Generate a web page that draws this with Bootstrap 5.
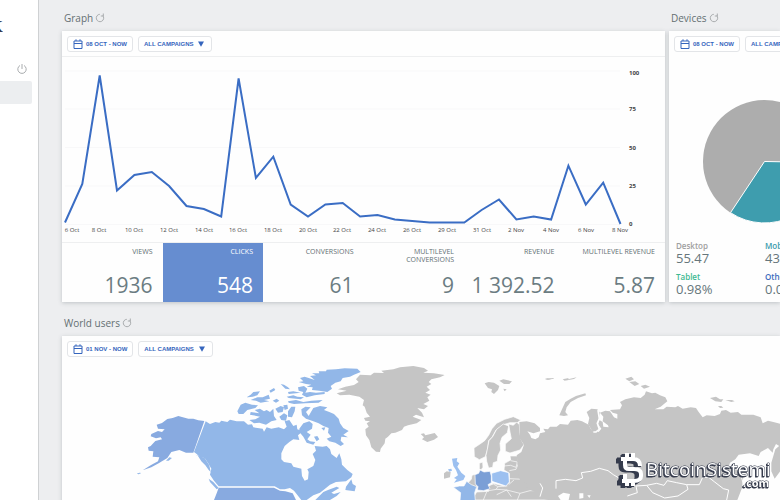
<!DOCTYPE html>
<html lang="en">
<head>
<meta charset="utf-8">
<meta name="viewport" content="width=device-width, initial-scale=1">
<title>Campaign statistics</title>
<link href="https://cdn.jsdelivr.net/npm/bootstrap@5.3.0/dist/css/bootstrap.min.css" rel="stylesheet">
<style>
body { background: #edeef0; font-family: "Open Sans", sans-serif; color: #5f6e73; }
svg { display: block; }
.side { flex: 0 0 39px; background: #fff; border-right: 1px solid #cfd1d3; padding-top: 15px; }
.brand-end { width: 3px; font: 700 17px/24px "Liberation Serif", serif; color: #333a4d; }
.side-item { display: block; height: 23px; margin: 7px 6px 0 0; background: #eceef0; border-radius: 0 2px 2px 0; }
.icon-btn { background: none; border: 0; padding: 0; line-height: 0; color: #a9acae; }
.power { margin: 25px 11px 0 0; }
.workspace { min-width: 0; padding: 9px 0 0 23px; }
.head-row { height: 22px; padding: 0 0 4px 2px; gap: 2px; }
.panel-title { font-size: 10px; line-height: 18px; margin: 0; font-weight: 400; color: #646e72; }
.panel-box { background: #fefefe; box-shadow: 0 1px 4px rgba(60, 70, 80, .25); }
.tools { padding: 5px 5px 4px; gap: 5px; height: 25px; }
.pill { flex: none; display: flex; align-items: center; gap: 3px; height: 16px; padding: 0 5px; background: #fff; border: 1px solid #e3e5e8; border-radius: 3px; color: #3565bd; font: 700 6px/14px "Liberation Sans", sans-serif; white-space: nowrap; }
.pill-drop { gap: 5px; padding: 0 7px 0 5px; }
.graph-col { min-width: 0; }
.device-col { flex: 0 0 111px; min-width: 0; }
.plot { border-top: 1px solid #eeeff0; border-bottom: 1px solid #eeeff0; }
.stat { flex: 1 1 0; min-width: 0; height: 59px; padding: 5px 10px 4px 0; text-align: right; }
.stat-name { font-size: 7px; line-height: 8px; }
.stat-num { font-size: 21px; line-height: 26px; color: #6b7c82; white-space: nowrap; }
.stat-on { background: #668dd0; color: #fff; }
.stat-on .stat-num { color: #fff; }
.legend-grid { display: grid; grid-template-columns: 89px 89px; row-gap: 7px; margin: 0; padding: 0 0 6px 7px; }
.legend-grid dt { font-size: 8px; line-height: 10px; font-weight: 600; }
.legend-grid dd { font-size: 13px; line-height: 14px; margin: 0; color: #66767b; }
.c-desktop { color: #a0a0a0; }
.c-mobile { color: #3b9bad; }
.c-tablet { color: #3db992; }
.c-other { color: #3a6bbd; }
.world { margin-top: 12px; }
.axis-x { font: 6px "Open Sans", sans-serif; fill: #444; text-anchor: middle; }
.axis-y { font: 700 6px "Open Sans", sans-serif; fill: #444; }
.watermark { fill: #fff; filter: drop-shadow(-1px 1px 0 #353b4c); }
.watermark text { stroke: #353b4c; stroke-width: 1px; paint-order: stroke; }
.wm { font: 19px "Open Sans", sans-serif; }
.wm-end { font: 700 11px "Open Sans", sans-serif; }
</style>
<script src="https://cdn.jsdelivr.net/npm/bootstrap@5.3.0/dist/js/bootstrap.bundle.min.js"></script>
</head>
<body class="overflow-hidden">
<svg width="0" height="0" class="position-absolute" aria-hidden="true">
  <symbol id="reload" viewBox="0 0 10 10"><path d="M7.800 2.600A3.700 3.700 0 1 1 4.800 1.300M8.300 .5V3H5.800" fill="none" stroke="currentColor"/></symbol>
  <symbol id="cal" viewBox="0 0 10 10"><path d="M1 2h8v7.5H1zM1 4.5h8M3 .3V2M7 .3V2" fill="none" stroke="currentColor"/></symbol>
  <symbol id="down" viewBox="0 0 6 6"><path d="M0 .5h6L3 5.8z" fill="currentColor"/></symbol>
</svg>
<div class="d-flex vh-100">
  <aside class="side">
    <div class="brand-end d-flex justify-content-end overflow-hidden">K</div>
    <button class="icon-btn power d-block ms-auto" aria-label="Log out"><svg width="10" height="10" viewBox="0 0 10 10"><path d="M3 1.5A4.2 4.2 0 1 0 7 1.5M5 0V5" fill="none" stroke="currentColor"/></svg></button>
    <a class="side-item" href="#" aria-label="Statistics"></a>
  </aside>
  <main class="workspace flex-grow-1 overflow-hidden">
    <div class="d-flex gap-1">
      <section class="graph-col flex-fill">
        <div class="head-row d-flex align-items-center"><h2 class="panel-title">Graph</h2><button class="icon-btn" aria-label="Reload graph"><svg width="10" height="10"><use href="#reload"/></svg></button></div>
        <div class="panel-box">
          <div class="tools d-flex">
            <button class="pill"><svg width="10" height="10"><use href="#cal"/></svg>08 OCT - NOW</button>
            <button class="pill pill-drop">ALL CAMPAIGNS<svg width="6" height="6"><use href="#down"/></svg></button>
          </div>
          <div class="plot">
            <svg class="w-100" viewBox="62 57 603 185" role="img" aria-label="Clicks by day">
              <path d="M65 71H620M65 109H620M65 147.500H620M65 186H620M65 224.500H620" stroke="#f8f8f9"/>
              <polyline fill="none" stroke="#3a6dc4" stroke-width="2" points="65,222.500 82.300,184 99.700,75.500 117,190.500 134.400,175 151.800,172 169.100,186 186.500,206 203.900,209 221.200,216.500 238.600,78.500 255.900,178 273.300,156.700 290.700,204.500 308,216.500 325.400,204.500 342.700,203 360.100,216.500 377.500,215 394.800,219.500 412.200,221 429.600,222.500 446.900,222.500 464.300,222.500 481.600,210 499,199.500 516.400,219.500 533.700,216.500 551.100,219.500 568.400,165.700 585.800,204.500 603.200,182.700 620.500,224"/>
              <g class="axis-x">
                <text x="72" y="232">6 Oct</text><text x="99" y="232">8 Oct</text><text x="134" y="232">10 Oct</text><text x="169" y="232">12 Oct</text><text x="204" y="232">14 Oct</text><text x="238" y="232">16 Oct</text><text x="273" y="232">18 Oct</text><text x="308" y="232">20 Oct</text><text x="342" y="232">22 Oct</text><text x="377" y="232">24 Oct</text><text x="412" y="232">26 Oct</text><text x="447" y="232">29 Oct</text><text x="482" y="232">31 Oct</text><text x="516" y="232">2 Nov</text><text x="551" y="232">4 Nov</text><text x="586" y="232">6 Nov</text><text x="620" y="232">8 Nov</text>
              </g>
              <g class="axis-y"><text x="629" y="75">100</text><text x="629" y="111">75</text><text x="629" y="150">50</text><text x="629" y="188">25</text><text x="629" y="226">0</text></g>
            </svg>
          </div>
          <div class="d-flex">
            <div class="stat d-flex flex-column justify-content-between"><div class="stat-name">VIEWS</div><div class="stat-num">1936</div></div>
            <div class="stat stat-on d-flex flex-column justify-content-between"><div class="stat-name">CLICKS</div><div class="stat-num">548</div></div>
            <div class="stat d-flex flex-column justify-content-between"><div class="stat-name">CONVERSIONS</div><div class="stat-num">61</div></div>
            <div class="stat d-flex flex-column justify-content-between"><div class="stat-name">MULTILEVEL<br>CONVERSIONS</div><div class="stat-num">9</div></div>
            <div class="stat d-flex flex-column justify-content-between"><div class="stat-name">REVENUE</div><div class="stat-num">1 392.52</div></div>
            <div class="stat d-flex flex-column justify-content-between"><div class="stat-name">MULTILEVEL REVENUE</div><div class="stat-num">5.87</div></div>
          </div>
        </div>
      </section>
      <section class="device-col d-flex flex-column">
        <div class="head-row d-flex align-items-center"><h2 class="panel-title">Devices</h2><button class="icon-btn" aria-label="Reload devices"><svg width="10" height="10"><use href="#reload"/></svg></button></div>
        <div class="panel-box flex-fill d-flex flex-column justify-content-between">
          <div class="tools d-flex">
            <button class="pill"><svg width="10" height="10"><use href="#cal"/></svg>08 OCT - NOW</button>
            <button class="pill pill-drop">ALL CAMPAIGNS<svg width="6" height="6"><use href="#down"/></svg></button>
          </div>
          <svg class="w-100" viewBox="669 69 111 160" role="img" aria-label="Share of devices">
            <circle cx="764.500" cy="161.500" r="61.500" fill="#adadad"/>
            <path d="M764.500 161.500L826 162.500A61.500 61.500 0 0 1 730.500 212.700Z" fill="#3e9dae" stroke="#fff" stroke-width="1"/>
          </svg>
          <dl class="legend-grid">
            <div><dt class="c-desktop">Desktop</dt><dd>55.47</dd></div>
            <div><dt class="c-mobile">Mobile</dt><dd>43.55%</dd></div>
            <div><dt class="c-tablet">Tablet</dt><dd>0.98%</dd></div>
            <div><dt class="c-other">Other</dt><dd>0.00%</dd></div>
          </dl>
        </div>
      </section>
    </div>
    <section class="world">
      <div class="head-row d-flex align-items-center"><h2 class="panel-title">World users</h2><button class="icon-btn" aria-label="Reload map"><svg width="10" height="10"><use href="#reload"/></svg></button></div>
      <div class="panel-box">
        <div class="tools d-flex">
          <button class="pill"><svg width="10" height="10"><use href="#cal"/></svg>01 NOV - NOW</button>
          <button class="pill pill-drop">ALL CAMPAIGNS<svg width="6" height="6"><use href="#down"/></svg></button>
        </div>
        <svg class="w-100" viewBox="62 361 718 142" role="img" aria-label="World map of users">
          <!-- North America -->
          <g transform="translate(130 360) scale(.33333)" fill="#92b7e8">
            <path fill="#88aae0" d="M223 183L205 181 190 176 175 176 145 168 128 174 112 177 96 189 80 194 84 206 104 208 96 216 84 213 64 222 62 229 78 235 92 232 96 238 76 243 62 258 54 262 56 272 70 274 68 290 88 292 84 304 62 316 38 331 64 322 86 310 112 294 124 276 148 270 168 278 190 278Z"/>
            <path d="M20 341l8-3 6 1-8 4zM108 302l10-10 8 2-10 8z"/>
            <path d="M227 184L240 192 256 186 268 188 274 182 292 186 300 179 320 184 342 184 354 194 366 193 370 202 398 206 402 215 410 202 424 206 446 202 462 208 470 200 464 184 478 180 490 198 500 194 502 208 518 214 504 226 508 240 490 238 478 246 464 258 454 280 454 298 462 306 484 310 490 320 514 326 516 348 524 362 534 358 536 336 532 328 550 318 556 300 548 282 558 272 554 258 578 260 590 258 600 268 604 282 620 294 628 280 634 298 636 314 652 330 668 342 664 352 648 364 618 366 600 374 588 384 570 398 550 406 530 420 514 420 492 392 480 384 464 388 450 388 434 379 266 379 252 362 240 344 244 326 236 312 224 294 210 292 200 282 192 276Z"/>
            <path d="M196 284l8 4 10 16 12 12 10 14 6 6-4-20-14-22zM236 356l14 10 16 18-6 4-20-22z"/>
            <path fill="#88aae0" d="M266 383H432L450 392 466 394 488 400 498 420H252L260 400Z"/>
            <path d="M594 390L620 380 628 384 604 398 612 402 632 396 620 408 600 420H556L580 396ZM648 380L664 358 668 372 678 378 674 394 646 390Z"/>
            <path d="M322 154L332 134 346 128 366 134 384 136 376 144 352 150 340 162 326 162ZM358 180L376 178 390 170 360 164 362 156 388 160 374 150 390 146 402 154 410 150 420 156 430 146 432 168 440 180 424 184 408 194 388 188 372 190Z"/>
            <path d="M350 112l12-8 8-8 20-2-8 12-14 4-14 2zM362 120l20-8 16 0 18-8 4 12-18 4 16 4-26 4-14-6zM418 92l14-8 4 6-14 8zM428 122l12-6 8 6-10 6zM452 72l10 2 12 8 6 6-14-2zM474 96l16-2 22 4-14 2-22 2zM470 110l20-4 12 4 20 2-10 6-36-4zM436 146l16-8 10 4-4 14-14 2zM460 136l12-2 2 12-10 4zM448 170l14-10 10 6-4 16-14-2zM474 154l10-14 12 0-2 14-8 18-12-2zM474 124l24-4 22 6 24-4 34-2-12 8-40 2-34 2-16-4zM504 82l18-4 10 8-6 12 14-2 18 2 26-2 0 6-30 4-24 6-14-8 4-8-14-4z"/>
            <path d="M506 66L520 64 510 54 524 50 536 54 554 60 540 48 558 46 546 40 568 40 566 34 588 34 590 29 618 28 644 25 682 26 692 36 672 44 660 50 638 54 632 64 616 68 602 78 606 86 592 96 568 92 546 90 548 82 530 80 544 74 528 72Z"/>
            <path d="M514 148L526 140 542 142 528 156 536 168 550 144 570 138 592 142 582 150 598 156 612 162 626 176 630 190 640 204 656 213 640 224 654 232 634 230 632 242 642 252 632 258 616 248 598 244 590 236 604 230 594 218 596 204 580 198 566 190 546 182 528 176 516 166ZM508 206l12-16 18-6 10 8-2 14-16 10 12 8-10 14 8 6 16 2-6 8-20-6-10-18-12-14zM552 230l10-2 6 10-8 6zM574 204l12-2-4 10z"/>
          </g>
          <!-- Greenland and Europe -->
          <g transform="translate(340 360) scale(.33333)" fill="#c5c5c5">
            <path d="M-6 88L16 80 42 75 56 66 48 58 60 44 92 46 102 38 132 39 124 32 160 28 180 22 220 18 252 24 264 32 250 38 282 40 314 45 300 52 274 58 266 66 274 72 260 80 270 90 256 98 272 104 262 112 268 122 250 132 264 138 252 148 232 144 246 158 252 172 228 164 218 170 244 180 230 190 204 196 192 200 186 210 166 218 154 220 144 230 136 236 134 250 122 266 120 276 108 275 94 262 88 240 78 226 76 208 86 200 80 190 90 184 76 182 72 174 90 170 80 158 74 140 68 136 72 120 58 110 28 104 0 106 -10 100 20 92Z"/>
            <path d="M242 222l10-2 4 6 28-7 10 12-12 8-20 7-16-8 6-6zM434 70l12-4 16 2 16 10-4 12-12 12-8-6 2-8-12-4zM478 62l12-4 26 6-8 8-16 0zM490 86l10 2-6 6zM614 57l8-2 14 1-10 3z"/>
            <g stroke="#fff" stroke-width="2">
              <path d="M402 264L420 252 434 242 446 226 456 206 470 190 494 178 520 170 542 180 532 188 510 188 490 194 468 210 456 232 446 242 442 270 436 290 418 299 403 290Z"/>
              <path d="M438 286L442 268 447 242 458 230 470 208 490 192 506 198 502 218 486 232 480 250 482 270 474 286 472 304 460 308 458 322 446 324 440 304Z"/>
              <path d="M506 192L520 196 530 186 538 194 540 220 544 240 552 254 540 270 510 279 496 274 496 252 514 236 510 216Z"/>
              <path d="M494 310L512 300 510 288 532 288 536 308 550 320 560 344 576 352 598 368 604 382 590 392 620 400 650 420H396L410 396 446 394 444 378 460 370 492 378 508 368 508 340 492 330Z"/>
              <path d="M492 318l20-2 16 6 4-16-20-4M508 332l20-4 8-20M508 356l42 2 10-14M506 374l16-14M444 378l16-6 14 8 28-2M446 392l24-4 30 2M468 388l6-8M470 404l30-14 14 20M500 390l40 10 30-8 20 0M430 420l10-24M540 400l-8 20" fill="none"/>
              <path d="M380 372l14-14 2-12 12-4v26l4 18-14-4zM418 310l10-4 1 16-6 8-5-4z"/>
              <path fill="#7b9fd6" d="M405 344L416 340 420 330 432 336 450 334 454 348 454 368 444 374 450 386 430 392 412 390 414 380 406 372Z"/>
              <path fill="#9cc0f0" d="M455 340L482 332 506 338 508 366 498 378 474 370 456 364Z"/>
              <path fill="#92b7e8" d="M340 382L358 378 372 378 380 364 394 374 410 380 404 398 406 422H360L362 398Z"/>
            </g>
            <path d="M312 340l8-6 12 2-2 16-18 4z"/>
            <path fill="#9cc0f0" d="M336 296L352 294 350 304 358 310 352 320 364 338 376 348 370 360 342 368 350 358 342 354 354 346 348 330 340 318ZM324 328l10-2 2 6-8 3z"/>
          </g>
          <!-- Asia -->
          <g transform="translate(540 360) scale(.33333)" fill="#c5c5c5">
            <path d="M-62 186L-40 184 -16 190 0 204 0 214 -20 220 -38 214 -30 224 -26 234 -14 238 -4 232 0 220 16 216 10 206 24 208 30 200 50 200 60 192 84 194 92 182 112 180 126 184 146 194 152 206 160 216 176 216 184 206 174 192 178 180 188 186 190 200 206 202 204 196 188 184 190 170 180 158 196 152 210 154 222 172 232 176 232 162 218 158 210 150 240 148 246 136 240 126 256 118 282 112 302 114 314 104 318 94 336 100 346 98 360 106 376 112 382 124 362 140 344 148 370 148 380 140 406 142 414 138 428 146 452 142 468 144 476 156 488 172 500 166 524 168 540 162 544 152 558 150 572 158 594 156 604 164 640 164 662 172 668 190 684 182 700 186 724 192V262L708 252 700 268 698 278 684 264 662 276 656 288 630 280 596 284 586 298 570 308 566 322 594 330 610 350 606 384 592 420H24L0 414 -14 396 -38 386 -42 370 -60 360 -68 338 -66 320 -70 286 -56 276 -48 254 -60 236Z"/>
            <path d="M140 156l14-10 18 2 8 10-6 30 4 14-4 14h-16l-14-24 4-18z"/>
            <path d="M174 150l4 26-6 14 6 18-10 8-8 0" fill="none" stroke="#fefefe" stroke-width="5"/>
            <path d="M58 166l8-18 10-22 16-10 16-8 28-8 2 6-24 8-22 12-12 16-4 14 8 10-12 2zM256 56l18-6 8 8-14 6zM268 66l18-2 12 8-14 6zM302 78l14-4 14 6-18 6zM510 114l18-4 12 8 10 0-6 8-18-2zM556 120l20 0 8 4-10 2zM534 138l10 0 6 5-10 1zM16 57l24-3 2 2-20 3zM68 58l18-4-2 4 26-6-8 5-28 5zM694 308l12-40 16-14v78l-18 24-10-22z"/>
            <path fill="none" stroke="#fff" stroke-width="3" d="M48 386V362L76 358 108 362 128 354 124 338 152 334 178 325 204 332 220 344 240 356M262 408L292 398 288 378 320 376 350 370 372 376 382 362 410 368 440 374 478 374 488 352 506 352 524 366 550 386 566 390 560 420M320 376L338 398 374 414 414 408 444 388 440 374M0 370L8 384 0 410M604 350L616 394"/>
            <path fill="#fefefe" d="M54 408l16-10 20 4-4 18H62zM118 400l12 0 0 14-12 2zM142 406l10 0-4 8z"/>
          </g>
          <!-- Watermark -->
          <g class="watermark" transform="translate(614 451)">
            <g fill="none">
              <path d="M10 3v4M16 3v4M10 31v5M16 31v5M3 9H17Q23 9 23 13V15M8 8V14Q8 18 12 18H17Q24 18 24 23V26Q24 31 18 31H4M8 24V30" stroke="#353b4c" stroke-width="5"/>
              <path d="M13 2v6M19 2v6M13 30v5M19 30v5M7 8H19Q26 8 26 15M11 8V14Q11 18 15 18H20Q27 18 27 23V25Q27 30 20 30H8M11 23V30" stroke="#fff" stroke-width="4"/>
            </g>
            <text class="wm" x="32" y="25">BitcoinSistemi</text>
            <text class="wm-end" x="129" y="36">.com</text>
          </g>
        </svg>
      </div>
    </section>
  </main>
</div>
</body>
</html>
